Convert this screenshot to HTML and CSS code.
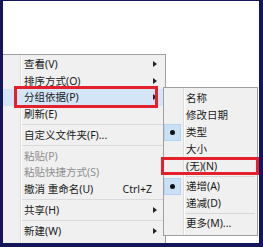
FILE: index.html
```html
<!DOCTYPE html>
<html lang="zh-CN">
<head>
    <meta charset="UTF-8">
    <meta name="viewport" content="width=device-width, initial-scale=1.0">
    <title>右键菜单</title>
    <link rel="stylesheet" href="styles.css">
</head>
<body>
    <!-- desktop frame -->
    <div id="frame">
        <ul class="menu main">
            <li class="item"><span>查看(V)</span><i class="arrow"></i></li>
            <li class="item"><span>排序方式(O)</span><i class="arrow"></i></li>
            <li class="item active marked"><span>分组依据(P)</span><i class="arrow"></i>
                <!-- flyout submenu -->
                <ul class="menu sub">
                    <li class="item"><span>名称</span></li>
                    <li class="item"><span>修改日期</span></li>
                    <li class="item checked"><b class="check"></b><span>类型</span></li>
                    <li class="item"><span>大小</span></li>
                    <li class="item marked"><span>(无)(N)</span></li>
                    <li class="sep"></li>
                    <li class="item checked"><b class="check"></b><span>递增(A)</span></li>
                    <li class="item"><span>递减(D)</span></li>
                    <li class="sep"></li>
                    <li class="item"><span>更多(M)...</span></li>
                </ul>
            </li>
            <li class="item"><span>刷新(E)</span></li>
            <li class="sep"></li>
            <li class="item"><span>自定义文件夹(F)...</span></li>
            <li class="sep"></li>
            <li class="item disabled"><span>粘贴(P)</span></li>
            <li class="item disabled"><span>粘贴快捷方式(S)</span></li>
            <li class="item"><span>撤消 重命名(U)</span><em class="key">Ctrl+Z</em></li>
            <li class="sep"></li>
            <li class="item"><span>共享(H)</span><i class="arrow"></i></li>
            <li class="sep"></li>
            <li class="item"><span>新建(W)</span><i class="arrow"></i></li>
        </ul>
    </div>
</body>
</html>
```

FILE: styles.css
```css
* {
    box-sizing: border-box;
}

body {
    margin: 0;
    font-family: "Noto Sans", "Noto Sans CJK SC", sans-serif;
    font-size: 10.5px;
    color: #1a1a1a;
}

#frame {
    width: 263px;
    height: 247px;
    background: #fff;
    border-style: solid;
    border-color: #15155c;
    border-width: 1px 4px 4px 3px;
    display: flex;
    flex-direction: column;
    overflow: hidden;
}

.menu {
    list-style: none;
    margin: 0;
    background-color: #f0f0f0;
}

.main {
    margin-top: 53px;
    width: 163px;
    flex: 1;
    padding: 1px 0 0;
    border-top: 1px solid #a0a0a0;
    border-right: 1px solid #a0a0a0;
    /* gutter line */
    background-image: linear-gradient(to right, transparent 17px, #dcdcdc 17px, #dcdcdc 18px, #fff 18px, #fff 19px, transparent 19px);
}

.item {
    position: relative;
    display: flex;
    align-items: center;
    height: 16.5px;
    padding-left: 21px;
    padding-right: 5px;
    line-height: 1;
    white-space: nowrap;
}

.item span {
    flex: 1;
}

.main .sep {
    height: 4.5px;
    margin-left: 19px;
    background: linear-gradient(#dadada, #dadada) 0 1.5px / 100% 1px no-repeat;
}

.disabled {
    color: #8e8e8e;
}

.key {
    font-style: normal;
    margin-right: 8px;
}

.arrow {
    width: 0;
    height: 0;
    margin-right: 3px;
    border-top: 3px solid transparent;
    border-bottom: 3px solid transparent;
    border-left: 4px solid #222;
}

.active {
    background-color: #d3e5f7;
}

/* red annotation boxes */
.marked::after {
    content: "";
    position: absolute;
    border: 3px solid #e3202b;
}

.main > .marked::after {
    left: 11px;
    right: 7px;
    top: -3px;
    bottom: -2px;
}

.sub {
    position: absolute;
    left: 160px;
    top: -2px;
    width: 95px;
    padding: 1.5px 0 3px;
    border: 1px solid #a0a0a0;
    background-image: linear-gradient(to right, transparent 19px, #dcdcdc 19px, #dcdcdc 20px, #fff 20px, #fff 21px, transparent 21px);
}

.sub .item {
    height: 17px;
    padding-left: 22px;
}

.sub .sep {
    height: 3px;
    margin-left: 22px;
    margin-right: 2px;
    background: linear-gradient(#d6d6d6, #d6d6d6) 0 1px / 100% 1px no-repeat;
}

.sub .marked::after {
    left: -3px;
    right: -2px;
    top: -1px;
    bottom: 0;
}

.check {
    position: absolute;
    left: 0;
    top: 0;
    width: 17px;
    height: 17px;
    background: #c9e0f5;
    border: 1px solid #b4d3f0;
}

.check::after {
    content: "";
    position: absolute;
    left: 5px;
    top: 5px;
    width: 5px;
    height: 5px;
    border-radius: 50%;
    background: #111;
}
```
